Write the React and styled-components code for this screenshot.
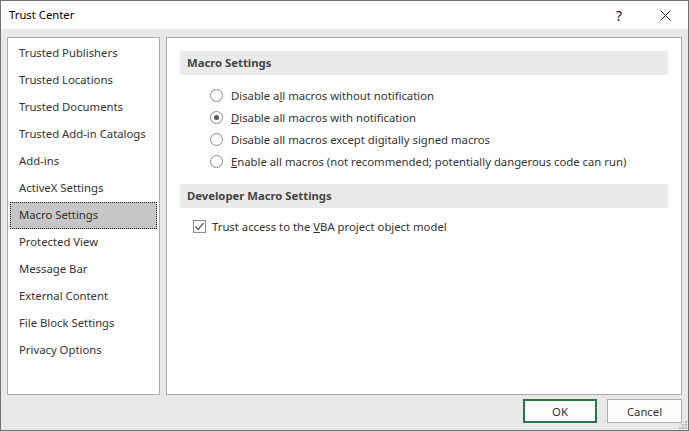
import React, { useState } from "react";
import styled, { createGlobalStyle } from "styled-components";

const GlobalStyle = createGlobalStyle`
  html, body { margin: 0; padding: 0; background: #ffffff; }
  body { font-family: "Segoe UI", "Noto Sans", "Liberation Sans", sans-serif; }
  * { box-sizing: border-box; }
`;

const FONT = "11.3px";

const navItems = [
  "Trusted Publishers",
  "Trusted Locations",
  "Trusted Documents",
  "Trusted Add-in Catalogs",
  "Add-ins",
  "ActiveX Settings",
  "Macro Settings",
  "Protected View",
  "Message Bar",
  "External Content",
  "File Block Settings",
  "Privacy Options",
];

const macroOptions = [
  { pre: "Disable a", key: "l", post: "l macros without notification" },
  { pre: "", key: "D", post: "isable all macros with notification" },
  { pre: "Disable all macros except di", key: "g", post: "itally signed macros" },
  { pre: "", key: "E", post: "nable all macros (not recommended; potentially dangerous code can run)" },
];

export default function App() {
  const [active, setActive] = useState("Macro Settings");
  const [macro, setMacro] = useState(1);
  const [vba, setVba] = useState(true);

  return (
    <>
      <GlobalStyle />
      <Dialog>
        <TitleBar>
          <Title>Trust Center</Title>
          <TitleButtons>
            <HelpButton>?</HelpButton>
            <CloseButton>
              <svg width="11" height="11" viewBox="0 0 11 11">
                <path d="M0.5 0.5 L10.5 10.5 M10.5 0.5 L0.5 10.5" stroke="#222" strokeWidth="1" fill="none" />
              </svg>
            </CloseButton>
          </TitleButtons>
        </TitleBar>

        <Body>
          <Panels>
            <NavList>
              {navItems.map((item) => (
                <NavItem key={item} $selected={item === active} onClick={() => setActive(item)}>
                  {item}
                </NavItem>
              ))}
            </NavList>

            <Content>
              <SectionHeader>Macro Settings</SectionHeader>
              <RadioGroup>
                {macroOptions.map((opt, i) => (
                  <OptionRow key={i} onClick={() => setMacro(i)}>
                    <RadioCircle $checked={macro === i} />
                    <OptionLabel>
                      {opt.pre}
                      <u>{opt.key}</u>
                      {opt.post}
                    </OptionLabel>
                  </OptionRow>
                ))}
              </RadioGroup>

              <SectionHeader $spaced>Developer Macro Settings</SectionHeader>
              <CheckRow onClick={() => setVba(!vba)}>
                <CheckBox>
                  {vba && (
                    <svg width="11" height="11" viewBox="0 0 11 11">
                      <path d="M1.5 5.5 L4.2 8.3 L9.5 2.2" stroke="#444" strokeWidth="1.2" fill="none" />
                    </svg>
                  )}
                </CheckBox>
                <OptionLabel>
                  Trust access to the <u>V</u>BA project object model
                </OptionLabel>
              </CheckRow>
            </Content>
          </Panels>

          <Footer>
            <Button $default>OK</Button>
            <Button>Cancel</Button>
          </Footer>
          <Grip>
            <svg width="10" height="10" viewBox="0 0 10 10">
              <g fill="#b8b8b8">
                <rect x="7" y="1" width="2" height="2" />
                <rect x="4" y="4" width="2" height="2" />
                <rect x="7" y="4" width="2" height="2" />
                <rect x="1" y="7" width="2" height="2" />
                <rect x="4" y="7" width="2" height="2" />
                <rect x="7" y="7" width="2" height="2" />
              </g>
            </svg>
          </Grip>
        </Body>
      </Dialog>
    </>
  );
}

const Dialog = styled.div`
  width: 689px;
  height: 431px;
  border: 1px solid #707070;
  display: flex;
  flex-direction: column;
  background: #e8e8e8;
  color: #333;
  font-size: ${FONT};
`;

const TitleBar = styled.div`
  height: 28px;
  background: #ffffff;
  display: flex;
  align-items: center;
  justify-content: space-between;
  padding-left: 8px;
`;

const Title = styled.div`
  color: #000;
  padding-bottom: 1px;
`;

const TitleButtons = styled.div`
  display: flex;
  height: 100%;
`;

const HelpButton = styled.div`
  width: 46px;
  display: flex;
  align-items: center;
  justify-content: center;
  font-size: 14px;
  color: #111;
`;

const CloseButton = styled.div`
  width: 46px;
  display: flex;
  align-items: center;
  justify-content: center;
`;

const Body = styled.div`
  flex: 1;
  position: relative;
  display: flex;
  flex-direction: column;
  padding: 8px 6px 7px 6px;
`;

const Panels = styled.div`
  height: 358px;
  display: flex;
  gap: 6px;
`;

const NavList = styled.div`
  width: 153px;
  background: #fff;
  border: 1px solid #ababab;
  padding: 2px;
  display: flex;
  flex-direction: column;
`;

const NavItem = styled.div`
  height: 27px;
  display: flex;
  align-items: center;
  padding: 0 0 2px 8px;
  white-space: nowrap;
  cursor: default;
  color: #333;
  border: 1px dotted ${(p) => (p.$selected ? "#222" : "transparent")};
  background: ${(p) => (p.$selected ? "#c6c6c6" : "transparent")};
`;

const Content = styled.div`
  flex: 1;
  background: #fff;
  border: 1px solid #ababab;
  padding: 13px;
  display: flex;
  flex-direction: column;
`;

const SectionHeader = styled.div`
  height: 24px;
  background: #eaeaea;
  display: flex;
  align-items: center;
  padding: 0 0 2px 7px;
  font-weight: bold;
  color: #444;
  margin-top: ${(p) => (p.$spaced ? "12px" : "0")};
`;

const RadioGroup = styled.div`
  margin-top: 10px;
  padding-left: 30px;
  display: flex;
  flex-direction: column;
`;

const OptionRow = styled.div`
  height: 21.8px;
  display: flex;
  align-items: center;
  gap: 8px;
  cursor: default;
`;

const RadioCircle = styled.span`
  width: 13px;
  height: 13px;
  border-radius: 50%;
  border: 1px solid #8a8a8a;
  background: #fff;
  display: flex;
  align-items: center;
  justify-content: center;
  flex-shrink: 0;

  &::after {
    content: "";
    width: 5px;
    height: 5px;
    border-radius: 50%;
    background: ${(p) => (p.$checked ? "#555" : "transparent")};
  }
`;

const OptionLabel = styled.span`
  white-space: nowrap;
  color: #333;
`;

const CheckRow = styled.div`
  margin-top: 7px;
  padding-left: 13px;
  height: 22px;
  display: flex;
  align-items: center;
  gap: 6px;
`;

const CheckBox = styled.span`
  width: 13px;
  height: 13px;
  border: 1px solid #8a8a8a;
  background: #fff;
  display: flex;
  align-items: center;
  justify-content: center;
  flex-shrink: 0;
`;

const Footer = styled.div`
  margin-top: 4px;
  display: flex;
  justify-content: flex-end;
  gap: 10px;
`;

const Button = styled.button`
  width: ${(p) => (p.$default ? "74px" : "75px")};
  height: 24px;
  background: #fdfdfd;
  border: ${(p) => (p.$default ? "2px solid #2f7448" : "1px solid #adadad")};
  font-family: inherit;
  font-size: ${FONT};
  color: #333;
  padding: 0;
`;

const Grip = styled.div`
  position: absolute;
  right: 0;
  bottom: 0;
  width: 10px;
  height: 10px;
  display: flex;
`;
